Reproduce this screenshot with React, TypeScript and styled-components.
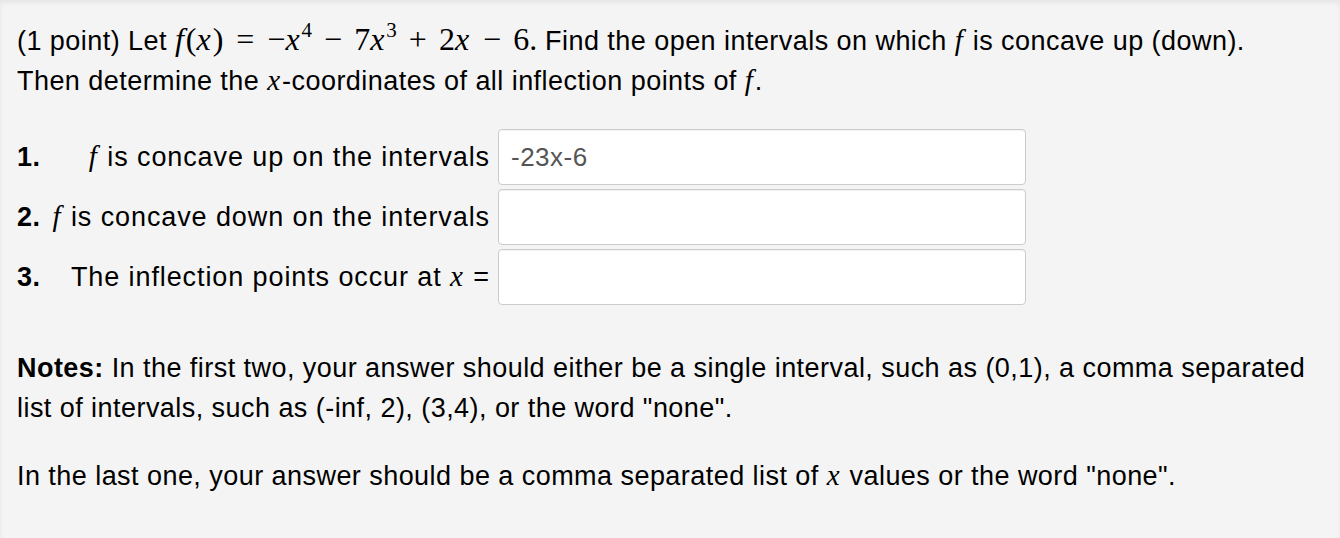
import styled, { createGlobalStyle } from "styled-components";

const GlobalStyle = createGlobalStyle`
  html, body {
    margin: 0;
    padding: 0;
    background: #f4f4f4;
  }
`;

interface Row {
  num: string;
  label: React.ReactNode;
  value: string;
}

const Var = styled.i`
  font-family: "Liberation Serif", "Times New Roman", serif;
  font-size: 29px;
  font-style: italic;
  line-height: 1;
  letter-spacing: 0;
  padding-right: 2px;
`;

const rows: Row[] = [
  {
    num: "1.",
    label: (
      <>
        <Var>f</Var> is concave up on the intervals
      </>
    ),
    value: "-23x-6",
  },
  {
    num: "2.",
    label: (
      <>
        <Var>f</Var> is concave down on the intervals
      </>
    ),
    value: "",
  },
  {
    num: "3.",
    label: (
      <>
        The inflection points occur at <Var>x</Var> =
      </>
    ),
    value: "",
  },
];

const App = () => {
  return (
    <>
      <GlobalStyle />
      <S.Page>
        <S.Para>
          (1 point) Let{" "}
          <S.Math>
            <S.MathVar>f</S.MathVar>(<S.MathVar>x</S.MathVar>)<S.Op $rel>=</S.Op>−
            <S.MathVar>x</S.MathVar>
            <S.Sup>4</S.Sup>
            <S.Op>−</S.Op>7<S.MathVar>x</S.MathVar>
            <S.Sup>3</S.Sup>
            <S.Op>+</S.Op>2<S.MathVar>x</S.MathVar>
            <S.Op>−</S.Op>6.
          </S.Math>{" "}
          Find the open intervals on which <Var>f</Var> is concave up (down).
          <br />
          Then determine the <Var>x</Var>-coordinates of all inflection points of{" "}
          <Var>f</Var>.
        </S.Para>

        <S.Answers>
          {rows.map((row) => (
            <S.AnswerRow key={row.num}>
              <S.Num>{row.num}</S.Num>
              <S.Label>{row.label}</S.Label>
              <S.Input defaultValue={row.value} />
            </S.AnswerRow>
          ))}
        </S.Answers>

        <S.Notes>
          <S.Para>
            <b>Notes:</b> In the first two, your answer should either be a single interval,
            such as (0,1), a comma separated list of intervals, such as (-inf, 2), (3,4), or
            the word "none".
          </S.Para>
          <S.Para>
            In the last one, your answer should be a comma separated list of <Var>x</Var>{" "}
            values or the word "none".
          </S.Para>
        </S.Notes>
      </S.Page>
    </>
  );
};

const S = {
  Page: styled.main`
    min-height: 538px;
    box-sizing: border-box;
    width: 1340px;
    padding: 21px 14px 0 17px;

    background: #f4f4f4;
    box-shadow: inset 0 3px 4px rgba(0, 0, 0, 0.06);

    color: #000;
    font-family: "Liberation Sans", Arial, sans-serif;
    font-size: 27px;
    letter-spacing: 0.45px;
    line-height: 40px;
  `,

  Para: styled.p`
    margin: 0;
  `,

  Math: styled.span`
    font-family: "Liberation Serif", "Times New Roman", serif;
    font-size: 32px;
    line-height: 1;
    letter-spacing: 0;
    white-space: nowrap;
  `,

  MathVar: styled.i`
    font-style: italic;
    padding-right: 2px;
  `,

  Op: styled.span<{ $rel?: boolean }>`
    margin: 0 ${({ $rel }) => ($rel ? "13px" : "12px")};
  `,

  Sup: styled.sup`
    font-size: 21px;
    line-height: 0;
    vertical-align: 13px;
  `,

  Answers: styled.div`
    display: grid;
    grid-template-columns: auto 1fr 528px;
    row-gap: 4px;
    align-items: center;

    width: 1009px;
    margin-top: 28px;
  `,

  AnswerRow: styled.div`
    display: contents;
  `,

  Num: styled.b`
    padding-right: 6px;
  `,

  Label: styled.span`
    text-align: right;
    padding-right: 8px;
    white-space: nowrap;
    letter-spacing: 0.9px;
  `,

  Input: styled.input`
    box-sizing: border-box;
    height: 56px;
    width: 528px;
    padding: 0 12px;

    border: 1px solid #cccccc;
    border-radius: 4px;
    background: #fff;
    box-shadow: inset 0 1px 1px rgba(0, 0, 0, 0.06);
    outline: none;

    color: #555;
    font-family: "Liberation Sans", Arial, sans-serif;
    font-size: 26px;
    letter-spacing: 0.5px;
  `,

  Notes: styled.section`
    display: flex;
    flex-direction: column;
    gap: 28px;

    margin-top: 43px;
  `,
};

export default App;
